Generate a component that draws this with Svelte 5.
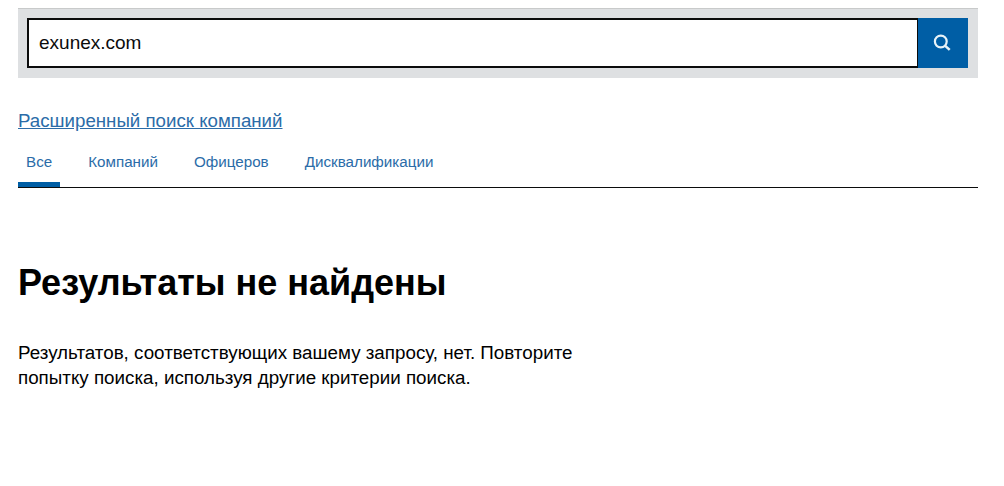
<script>
	const tabs = ['Все', 'Компаний', 'Офицеров', 'Дисквалификации'];
	let query = 'exunex.com';
</script>

<div class="page">
	<form class="search">
		<input class="field" type="text" bind:value={query} />
		<button class="go" type="button" aria-label="Поиск">
			<svg width="18" height="18" viewBox="0 0 18 18" fill="none" stroke="#e8f3f8" stroke-width="2.2">
				<circle cx="7.8" cy="7.5" r="5.9" />
				<path d="M11.9 11.6 L16.7 15.9" stroke-width="2.6" />
			</svg>
		</button>
	</form>

	<a class="advanced" href="#top">Расширенный поиск компаний</a>

	<nav class="tabs">
		{#each tabs as tab, i}
			<a class="tab" class:active={i === 0} href="#top">{tab}</a>
		{/each}
	</nav>

	<h1>Результаты не найдены</h1>
	<p>Результатов, соответствующих вашему запросу, нет. Повторите попытку поиска, используя другие критерии поиска.</p>
</div>

<style>
	:global(body) {
		background: #fff;
	}
	.page {
		padding: 8px 26px 0 18px;
		font-family: "Liberation Sans", Arial, sans-serif;
		color: #0b0c0c;
	}
	.search {
		display: flex;
		height: 70px;
		box-sizing: border-box;
		padding: 9px 10px 10px 9px;
		background: #dee0e2;
		border-top: 1px solid #c8caca;
	}
	.field {
		flex: 1;
		min-width: 0;
		height: 50px;
		box-sizing: border-box;
		border: 2px solid #0b0c0c;
		border-right-width: 1px;
		border-radius: 0;
		padding: 0 10px;
		font: 19px "Liberation Sans", Arial, sans-serif;
		color: #0b0c0c;
		background: #fff;
		outline: none;
	}
	.go {
		width: 50px;
		height: 50px;
		padding: 0 2px 0 0;
		border: 0;
		background: #005ea5;
		display: flex;
		align-items: center;
		justify-content: center;
	}
	.advanced {
		display: block;
		margin-top: 32px;
		font-size: 18.7px;
		line-height: 22px;
		color: #2b6ca8;
	}
	.tabs {
		display: flex;
		gap: 20px;
		margin-top: 16px;
		height: 39px;
		border-bottom: 1px solid #0b0c0c;
	}
	.tab {
		padding: 4px 8px 0;
		box-sizing: border-box;
		height: 39px;
		font-size: 15.2px;
		line-height: 20px;
		color: #2b6ca8;
		text-decoration: none;
	}
	.active {
		border-bottom: 5px solid #005ea5;
	}
	h1 {
		margin: 75px 0 0;
		font-size: 36px;
		line-height: 40px;
		font-weight: 700;
		color: #000;
	}
	p {
		margin: 37px 0 0;
		width: 590px;
		font-size: 18.8px;
		line-height: 25px;
		color: #000;
	}
</style>
